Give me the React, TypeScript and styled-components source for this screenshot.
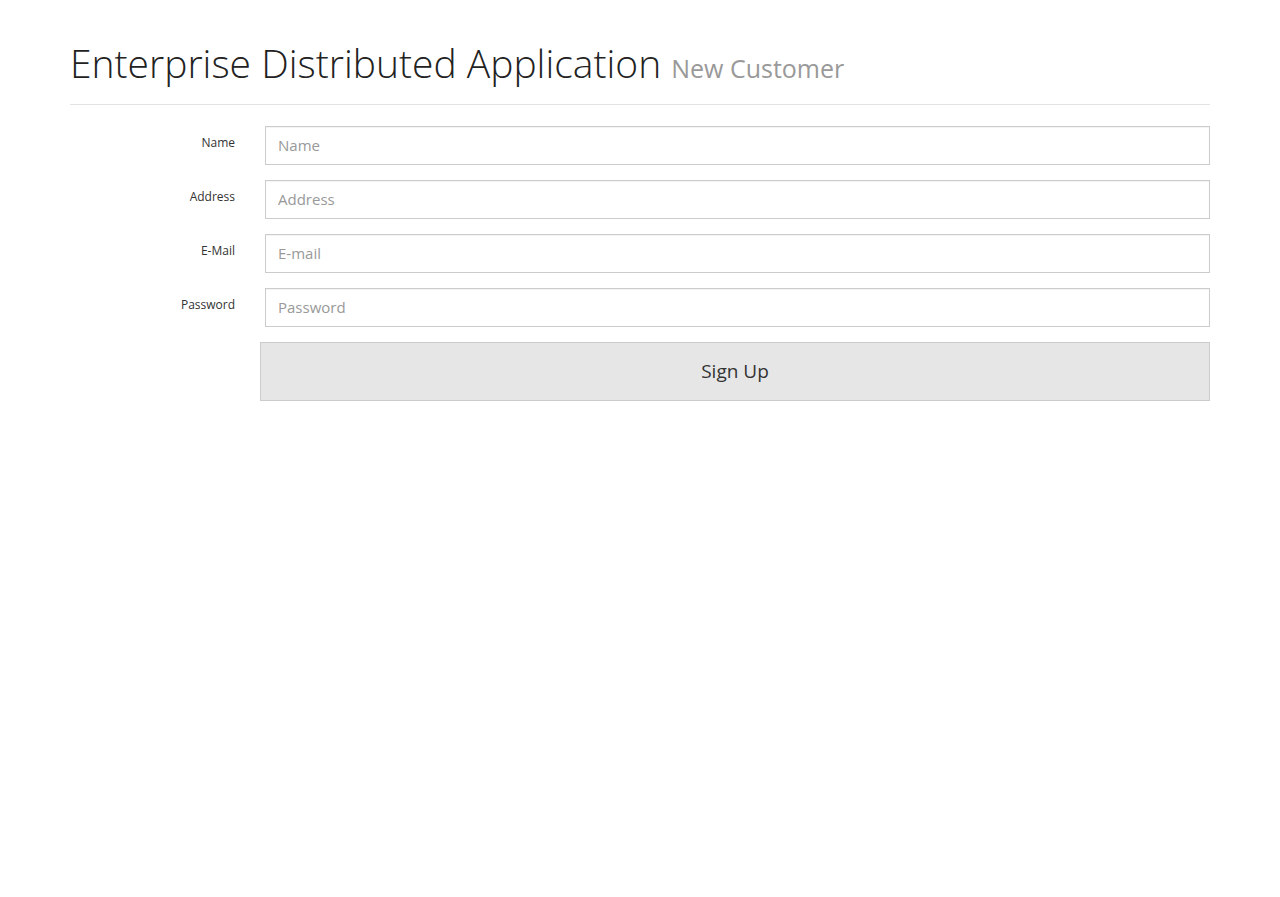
import React from "react";
import styled, { createGlobalStyle } from "styled-components";

const Global = createGlobalStyle`
  html, body { margin: 0; padding: 0; background: #fff; }
  body { font-family: "Open Sans", "Liberation Sans", sans-serif; color: #333; }
  * { box-sizing: border-box; }
`;

const Page = styled.div`
  width: 1140px;
  margin: 0 auto;
  padding-top: 37px;
`;

const Header = styled.header`
  display: flex;
  align-items: baseline;
  gap: 10px;
  padding-bottom: 15px;
  border-bottom: 1px solid #e3e3e3;
`;

const Title = styled.h1`
  margin: 0;
  font-weight: 300;
  font-size: 39px;
  line-height: 52px;
  color: #222;
`;

const Subtitle = styled.small`
  font-size: 25px;
  font-weight: 400;
  color: #999;
`;

const Form = styled.form`
  display: flex;
  flex-direction: column;
  gap: 15px;
  padding-top: 21px;
`;

const Row = styled.div<{ $gap?: number }>`
  display: grid;
  grid-template-columns: 165px 1fr;
  column-gap: ${(p) => p.$gap ?? 30}px;
  align-items: start;
`;

const Label = styled.label`
  text-align: right;
  font-size: 12px;
  line-height: 16px;
  padding-top: 9px;
  color: #333;
`;

const Input = styled.input`
  height: 39px;
  width: 100%;
  border: 1px solid #ccc;
  border-radius: 0;
  padding: 0 12px 2px;
  font-family: "Open Sans", "Liberation Sans", sans-serif;
  font-size: 15px;
  color: #555;
  box-shadow: inset 0 1px 1px rgba(0, 0, 0, 0.05);
  outline: none;
  &::placeholder { color: #999; }
`;

const Button = styled.button`
  height: 59px;
  width: 100%;
  border: 1px solid #ccc;
  background: #e6e6e6;
  font-family: "Open Sans", "Liberation Sans", sans-serif;
  font-size: 19px;
  color: #333;
  padding-bottom: 2px;
  cursor: pointer;
`;

const fields = [
  { label: "Name", placeholder: "Name", type: "text" },
  { label: "Address", placeholder: "Address", type: "text" },
  { label: "E-Mail", placeholder: "E-mail", type: "email" },
  { label: "Password", placeholder: "Password", type: "password" },
];

export default function App() {
  return (
    <>
      <Global />
      <Page>
        <Header>
          <Title>Enterprise Distributed Application</Title>
          <Subtitle>New Customer</Subtitle>
        </Header>
        <Form onSubmit={(e) => e.preventDefault()}>
          {fields.map((f) => (
            <Row key={f.label}>
              <Label>{f.label}</Label>
              <Input type={f.type} placeholder={f.placeholder} />
            </Row>
          ))}
          <Row $gap={25}>
            <span />
            <Button type="submit">Sign Up</Button>
          </Row>
        </Form>
      </Page>
    </>
  );
}
